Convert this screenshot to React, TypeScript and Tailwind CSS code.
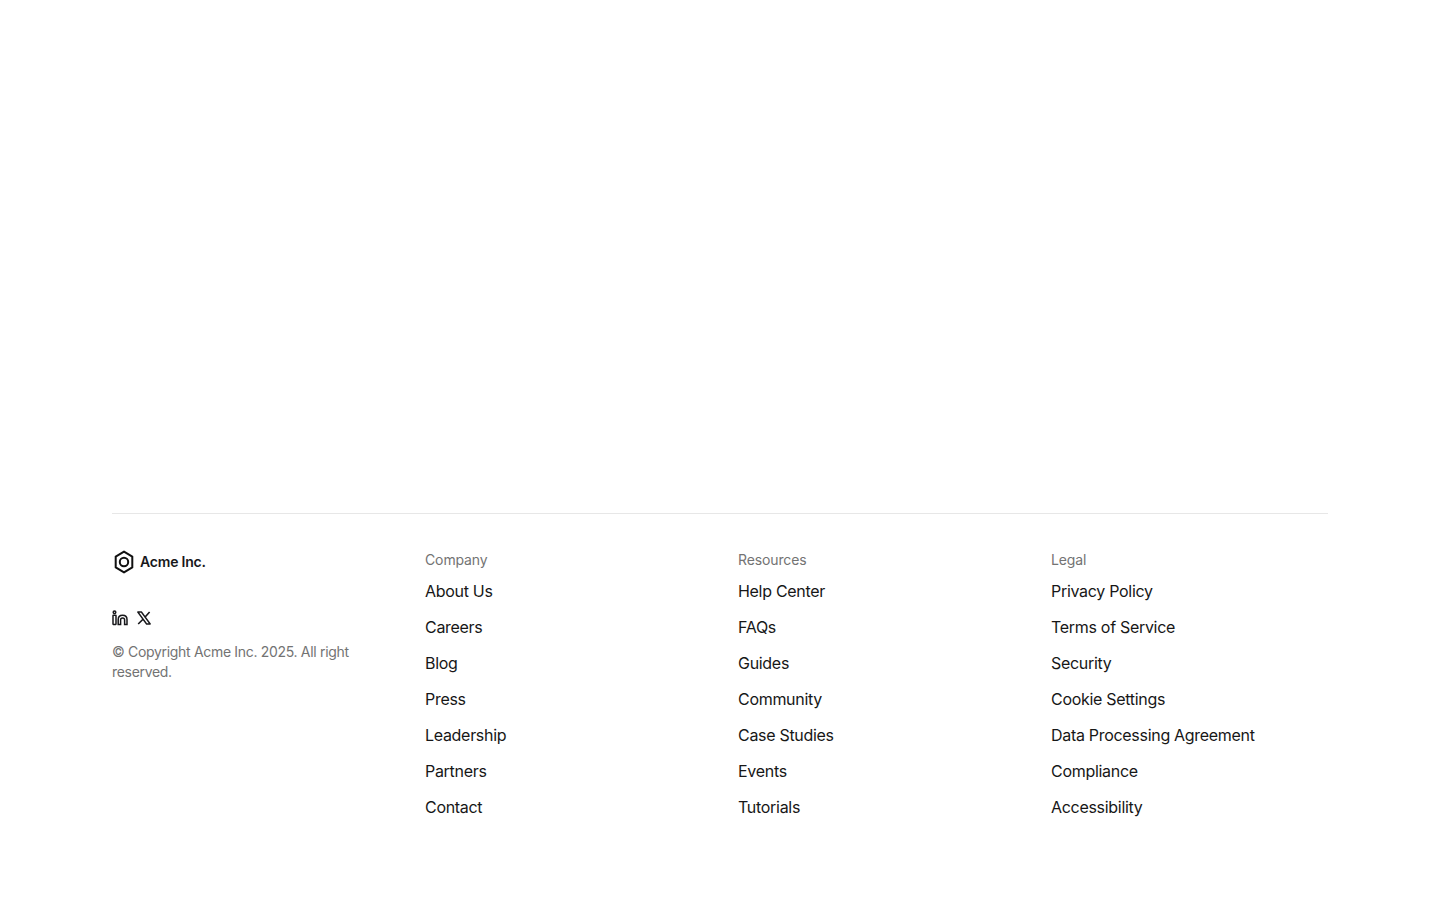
const columns = [
  { title: "Company", links: ["About Us", "Careers", "Blog", "Press", "Leadership", "Partners", "Contact"] },
  { title: "Resources", links: ["Help Center", "FAQs", "Guides", "Community", "Case Studies", "Events", "Tutorials"] },
  { title: "Legal", links: ["Privacy Policy", "Terms of Service", "Security", "Cookie Settings", "Data Processing Agreement", "Compliance", "Accessibility"] },
]

function Logo() {
  return (
    <svg width="24" height="24" viewBox="0 0 24 24" fill="none" stroke="#111111" strokeWidth="2" strokeLinejoin="round">
      <path d="M12 1.6 20.3 6.6V17.4L12 22.4 3.7 17.4V6.6Z" />
      <circle cx="12" cy="12" r="4.2" />
    </svg>
  )
}

function LinkedIn() {
  return (
    <svg width="16" height="16" viewBox="0 0 16 16" fill="none" stroke="#18181b" strokeWidth="1.5">
      <circle cx="2.5" cy="2.2" r="1.3" />
      <rect x="1" y="5.2" width="3" height="9.2" rx="0.3" />
      <path d="M6.2 14.4V9.5C6.2 6.8 8 5.2 10.6 5.2 13.2 5.2 15 6.8 15 9.5V14.4H12.6V9.8C12.6 8.7 11.8 8 10.6 8 9.4 8 8.6 8.7 8.6 9.8V14.4Z" />
    </svg>
  )
}

function XLogo() {
  return (
    <svg width="16" height="16" viewBox="0 0 16 16" fill="none" stroke="#18181b" strokeWidth="1.4" strokeLinejoin="round">
      <path d="M1.8 2H5.4L14.2 14H10.6Z" />
      <path d="M13.6 2 8.9 7.2M7 9.2 2.2 14" strokeWidth="1.6" />
    </svg>
  )
}

export default function App() {
  return (
    <div className="min-h-screen bg-white font-['Inter',sans-serif] flex flex-col justify-end">
      <footer className="mx-[112px] border-t border-[#e7e7e7] pt-[34px] pb-[81px] grid grid-cols-4 gap-9">
        <div>
          <div className="flex items-center gap-1 h-6 mt-[2px]">
            <Logo />
            <span className="text-sm font-semibold text-[#18181b] tracking-[-0.2px]">Acme Inc.</span>
          </div>
          <div className="flex items-center gap-2 mt-[36px]">
            <LinkedIn />
            <XLogo />
          </div>
          <p className="mt-[16px] text-sm leading-5 text-[#737373] tracking-[-0.32px]">© Copyright Acme Inc. 2025. All right reserved.</p>
        </div>
        {columns.map(col => (
          <div key={col.title}>
            <h3 className="text-sm leading-5 text-[#737373] font-normal tracking-[-0.12px] mb-[9px] mt-[2px]">{col.title}</h3>
            <ul className="flex flex-col gap-3">
              {col.links.map(link => (
                <li key={link} className="text-base leading-6 text-[#171717] tracking-[-0.3px]">{link}</li>
              ))}
            </ul>
          </div>
        ))}
      </footer>
    </div>
  )
}
